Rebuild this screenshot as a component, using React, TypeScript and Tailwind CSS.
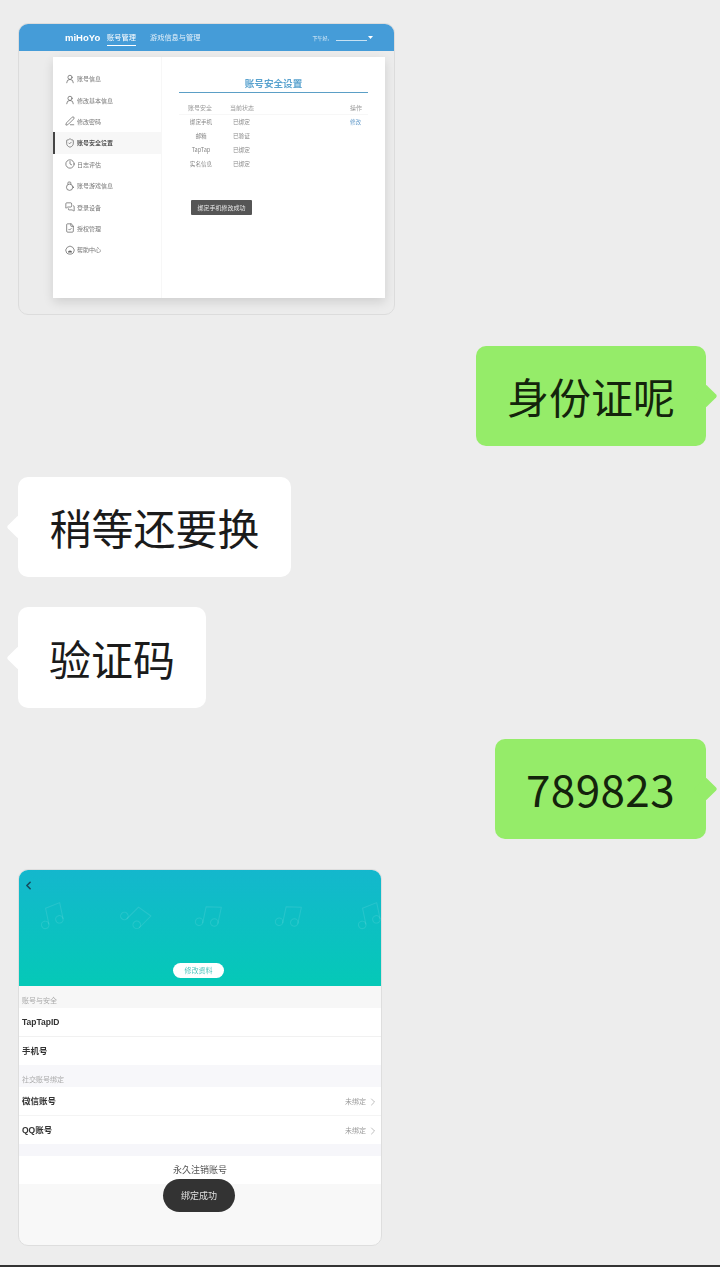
import { ChevronLeft, ChevronRight, Clock, FileCheck, Music, PenLine, ShieldCheck, UserRound, MessagesSquare } from "lucide-react";
import type { ReactNode } from "react";

const font = "font-['Noto_Sans_CJK_SC','Noto_Sans',sans-serif]";

function GameIcon({ size, strokeWidth, className }: { size: number; strokeWidth: number; className: string }) {
  return (
    <svg width={size} height={size} viewBox="0 0 24 24" fill="none" stroke="currentColor" strokeWidth={strokeWidth} className={className}>
      <circle cx="11" cy="15" r="7.5" />
      <path d="M7 8V4.5a2 2 0 0 1 2-2h3a2 2 0 0 1 2 2V8" />
      <path d="M18.5 13.5l3 1.5-3 1.5" />
    </svg>
  );
}

function HelpIcon({ size, strokeWidth, className }: { size: number; strokeWidth: number; className: string }) {
  return (
    <svg width={size} height={size} viewBox="0 0 24 24" fill="none" stroke="currentColor" strokeWidth={strokeWidth} className={className}>
      <path d="M4 19a10 10 0 1 1 16 0" />
      <path d="M4 19c1.5 2 4.500 3 8 3s6.500-1 8-3" />
      <path d="M7 18a5 5 0 0 1 10 0z" fill="currentColor" stroke="none" />
    </svg>
  );
}

const menu = [
  { label: "账号信息", icon: UserRound },
  { label: "修改基本信息", icon: UserRound },
  { label: "修改密码", icon: PenLine },
  { label: "账号安全设置", icon: ShieldCheck, active: true },
  { label: "日志评估", icon: Clock },
  { label: "账号游戏信息", icon: GameIcon },
  { label: "登录设备", icon: MessagesSquare },
  { label: "授权管理", icon: FileCheck },
  { label: "帮助中心", icon: HelpIcon },
];

const rows = [
  ["绑定手机", "已绑定", "修改"],
  ["邮箱", "已验证", ""],
  ["TapTap", "已绑定", ""],
  ["实名信息", "已绑定", ""],
];

// chat bubble, the tail sits over the edge
function Bubble({ side, className, children }: { side: "left" | "right"; className: string; children: ReactNode }) {
  const mine = side === "right";
  return (
    <div className={`relative flex items-center justify-center rounded-[10px] ${mine ? "self-end bg-[#95ec69]" : "self-start bg-white"} ${className}`}>
      <span
        className={`absolute top-1/2 h-[17px] w-[17px] -translate-y-1/2 rotate-45 rounded-[2px] ${mine ? "-right-[8px] bg-[#95ec69]" : "-left-[8px] bg-white"}`}
      />
      <span className={`relative leading-none ${mine ? "text-[#14240c]" : "text-[#1b1b1b]"}`}>{children}</span>
    </div>
  );
}

function WebCard() {
  return (
    <div className="mt-[23px] ml-[18px] flex h-[292px] w-[377px] flex-col overflow-hidden rounded-[10px] border border-[#dcdcdc] bg-[#ececec] blur-[0.6px]">
      <div className="flex h-[27px] shrink-0 items-center bg-[#459cd8] pl-[46px] pr-[21px] text-white">
        <span className="w-[42px] font-['Liberation_Sans',sans-serif] text-[9.5px] font-bold leading-none">miHoYo</span>
        <span className="flex h-full w-[29px] items-center justify-center text-[7.2px]">
          <span className="border-b border-white pb-[2px] pt-[3px]">账号管理</span>
        </span>
        <span className="ml-[14px] text-[7.2px] text-white/85">游戏信息与管理</span>
        <span className="ml-auto text-[5px] text-white/85">下午好,</span>
        <span className="ml-[7px] w-[31px] border-b border-white/70 text-[5px] leading-[5px] text-transparent">x</span>
        <svg width="5" height="3" viewBox="0 0 5 3" className="ml-[1px]">
          <polygon points="0,0 5,0 2.5,3" fill="#ffffff" />
        </svg>
      </div>
      <div className="ml-[34px] mt-[6px] flex h-[241px] w-[332px] bg-white shadow-[0_4px_10px_rgba(0,0,0,0.12)]">
        <div className="w-[109px] shrink-0 border-r border-[#f7f7f7] pt-[11px]">
          {menu.map((item) => {
            const Icon = item.icon;
            return (
              <div
                key={item.label}
                className={`flex h-[21.4px] items-center gap-[2px] text-[6px] ${item.active ? "border-l-2 border-[#444] bg-[#f7f7f7] pl-[10px] font-bold text-[#555]" : "pl-[12px] text-[#777]"}`}
              >
                <Icon size={10} strokeWidth={1.8} className="shrink-0 text-[#666]" />
                {item.label}
              </div>
            );
          })}
        </div>
        <div className="flex-1 pl-[17px] pr-[17px] pt-[19px]">
          <div className="border-b-[1.5px] border-[#5b9fc6] pb-[2px] text-center text-[9.6px] font-bold leading-[14px] text-[#5ba3cf]">
            账号安全设置
          </div>
          <div className="mt-[7px] flex h-[15px] items-center border-b border-[#f7f7f7] text-[6px] text-[#999]">
            <span className="w-[44px] pl-[9px]">账号安全</span>
            <span className="w-[127px] pl-[7px]">当前状态</span>
            <span>操作</span>
          </div>
          {rows.map((r) => (
            <div key={r[0]} className="flex h-[14px] items-center text-[5.6px] text-[#888]">
              <span className="w-[44px] text-center">{r[0]}</span>
              <span className="w-[127px] pl-[10px]">{r[1]}</span>
              <span className="text-[#6a9fcc]">{r[2]}</span>
            </div>
          ))}
          <div className="ml-[12px] mt-[29px] flex h-[15px] w-[61px] items-center justify-center rounded-[1px] bg-[#555] text-[6px] text-white/85">
            绑定手机修改成功
          </div>
        </div>
      </div>
    </div>
  );
}

function Row({ label, value, className }: { label: string; value?: string; className: string }) {
  return (
    <div className={`flex items-center bg-white pl-[3px] pr-[2px] pt-[1px] text-[#333] ${className}`}>
      <span className="font-['Liberation_Sans','Noto_Sans_CJK_SC',sans-serif] text-[8.5px] font-bold">{label}</span>
      {value && (
        <>
          <span className="ml-auto text-[7px] text-[#999]">{value}</span>
          <ChevronRight size={12} strokeWidth={1.1} className="ml-[1px] text-[#888]" />
        </>
      )}
    </div>
  );
}

function AppCard() {
  const notes = ["left-[18px] -rotate-12", "left-[102px] rotate-45", "left-[175px] rotate-12", "left-[255px] rotate-12", "left-[335px] -rotate-12"];
  return (
    <div className="relative mt-[30px] ml-[18px] flex h-[377px] w-[364px] flex-col overflow-hidden rounded-[10px] border border-[#dedede] bg-[#f8f8f8] blur-[0.4px]">
      <div className="relative -mx-px -mt-px h-[117px] shrink-0 bg-gradient-to-b from-[#14b7cd] to-[#05c9b7]">
        {notes.map((n) => (
          <Music key={n} size={30} strokeWidth={0.8} className={`absolute top-[32px] text-white/10 ${n}`} />
        ))}
        <ChevronLeft size={13} strokeWidth={3} className="absolute left-[4px] top-[10px] text-[#174a5c]" />
        <div className="absolute bottom-[8px] left-[155px] flex h-[15px] w-[51px] items-center justify-center rounded-full bg-white text-[7px] text-[#4ec5bd]">
          修改资料
        </div>
      </div>
      <div className="flex h-[22px] items-center bg-[#f7f7f7] pl-[3px] pt-[6px] text-[7px] text-[#aaa]">账号与安全</div>
      <Row label="TapTapID" className="h-[28px]" />
      <div className="h-px bg-[#f1f1f1]" />
      <Row label="手机号" className="h-[28px]" />
      <div className="flex h-[22px] items-center bg-[#f7f7fa] pl-[3px] pt-[6px] text-[7px] text-[#aaa]">社交账号绑定</div>
      <Row label="微信账号" value="未绑定" className="h-[28px]" />
      <div className="h-px bg-[#f4f4f4]" />
      <Row label="QQ账号" value="未绑定" className="h-[28px]" />
      <div className="h-[12px] bg-[#f6f6fa]" />
      <div className="flex h-[28px] items-center justify-center bg-white text-[9px] text-[#555]">永久注销账号</div>
      <div className="absolute left-[144px] top-[309px] flex h-[33px] w-[72px] items-center justify-center rounded-full bg-[#333] text-[9px] text-white/85">
        绑定成功
      </div>
    </div>
  );
}

export default function App() {
  return (
    <div className={`flex h-[1267px] w-[720px] flex-col overflow-hidden bg-[#ededed] ${font}`}>
      <WebCard />
      <Bubble side="right" className="mr-[14px] mt-[31px] h-[100px] w-[230px] text-[42px]">身份证呢</Bubble>
      <Bubble side="left" className="ml-[18px] mt-[31px] h-[100px] w-[273px] text-[42px]">稍等还要换</Bubble>
      <Bubble side="left" className="ml-[18px] mt-[30px] h-[101px] w-[188px] text-[42px]">验证码</Bubble>
      <Bubble side="right" className="mr-[14px] mt-[31px] h-[100px] w-[211px] pb-[2px] text-[44px] tracking-[0.4px]">789823</Bubble>
      <AppCard />
      <div className="mt-auto h-[2px] shrink-0 bg-[#333]" />
    </div>
  );
}
